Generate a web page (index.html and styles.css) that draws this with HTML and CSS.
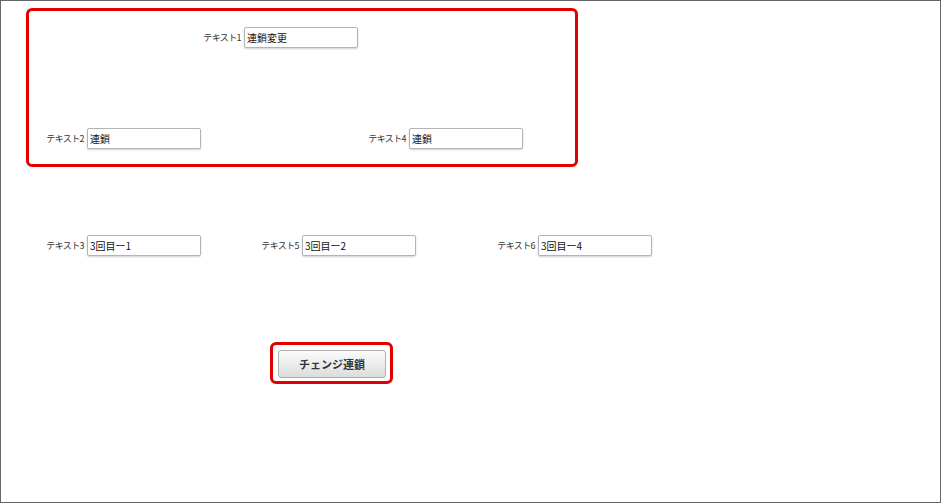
FILE: index.html
```html
<!DOCTYPE html>
<html lang="ja">
<head>
  <meta charset="UTF-8">
  <meta name="viewport" content="width=device-width, initial-scale=1.0">
  <title>チェンジ連鎖</title>
  <link rel="stylesheet" href="styles.css">
</head>
<body>
  <div class="frame">
    <!-- 連鎖対象の枠 -->
    <div class="chain-box">
      <div class="row row-top">
        <div class="field field-1">
          <label for="text1">テキスト1</label>
          <input type="text" id="text1" value="連鎖変更">
        </div>
      </div>
      <div class="row row-bottom">
        <div class="field field-2">
          <label for="text2">テキスト2</label>
          <input type="text" id="text2" value="連鎖">
        </div>
        <div class="field field-4">
          <label for="text4">テキスト4</label>
          <input type="text" id="text4" value="連鎖">
        </div>
      </div>
    </div>

    <div class="row row-free">
      <div class="field field-3">
        <label for="text3">テキスト3</label>
        <input type="text" id="text3" value="3回目ー1">
      </div>
      <div class="field field-5">
        <label for="text5">テキスト5</label>
        <input type="text" id="text5" value="3回目ー2">
      </div>
      <div class="field field-6">
        <label for="text6">テキスト6</label>
        <input type="text" id="text6" value="3回目ー4">
      </div>
    </div>

    <div class="controls">
      <div class="button-mark">
        <button type="button">チェンジ連鎖</button>
      </div>
    </div>
  </div>
</body>
</html>
```

FILE: styles.css
```css
body {
  margin: 0;
  padding: 0;
  background-color: white;
  font-family: 'Noto Sans CJK JP', 'Noto Sans', sans-serif;
  color: #333;
}

.frame {
  width: 941px;
  height: 503px;
  box-sizing: border-box;
  border: 1px solid #666;
  padding-top: 7px;
}

.chain-box {
  margin-left: 25px;
  width: 552px;
  height: 159px;
  box-sizing: border-box;
  border: 3px solid #e00000;
  border-radius: 6px;
  padding-top: 16px;
}

.row {
  display: flex;
  height: 21px;
}

.row-bottom {
  margin-top: 80px;
}

.row-free {
  margin-top: 68px;
}

.field {
  display: flex;
  align-items: center;
  gap: 3px;
}

.field label {
  width: 38px;
  font-size: 9px;
  letter-spacing: -0.6px;
  white-space: nowrap;
  text-align: right;
}

.field input {
  width: 114px;
  height: 21px;
  box-sizing: border-box;
  padding: 0 2px;
  border: 1px solid #b4b4b4;
  border-radius: 2px;
  box-shadow: 0 1px 2px rgba(0, 0, 0, 0.18);
  font-family: inherit;
  font-size: 10px;
  color: #111;
}

.field-1 {
  margin-left: 174px;
}

.field-2 {
  margin-left: 17px;
}

.field-4 {
  margin-left: 167px;
}

.field-3 {
  margin-left: 45px;
}

.field-5 {
  margin-left: 60px;
}

.field-6 {
  margin-left: 81px;
}

.controls {
  margin-top: 86px;
  padding-left: 269px;
}

.button-mark {
  display: inline-block;
  width: 123px;
  height: 42px;
  box-sizing: border-box;
  border: 3px solid #e00000;
  border-radius: 6px;
  padding: 5px 0 0 5px;
}

.button-mark button {
  width: 108px;
  height: 28px;
  border: 1px solid #b0b0b0;
  border-radius: 3px;
  background: linear-gradient(#fcfcfc, #dcdcdc);
  font-family: inherit;
  font-size: 11px;
  font-weight: bold;
  color: #333;
  cursor: pointer;
}
```
